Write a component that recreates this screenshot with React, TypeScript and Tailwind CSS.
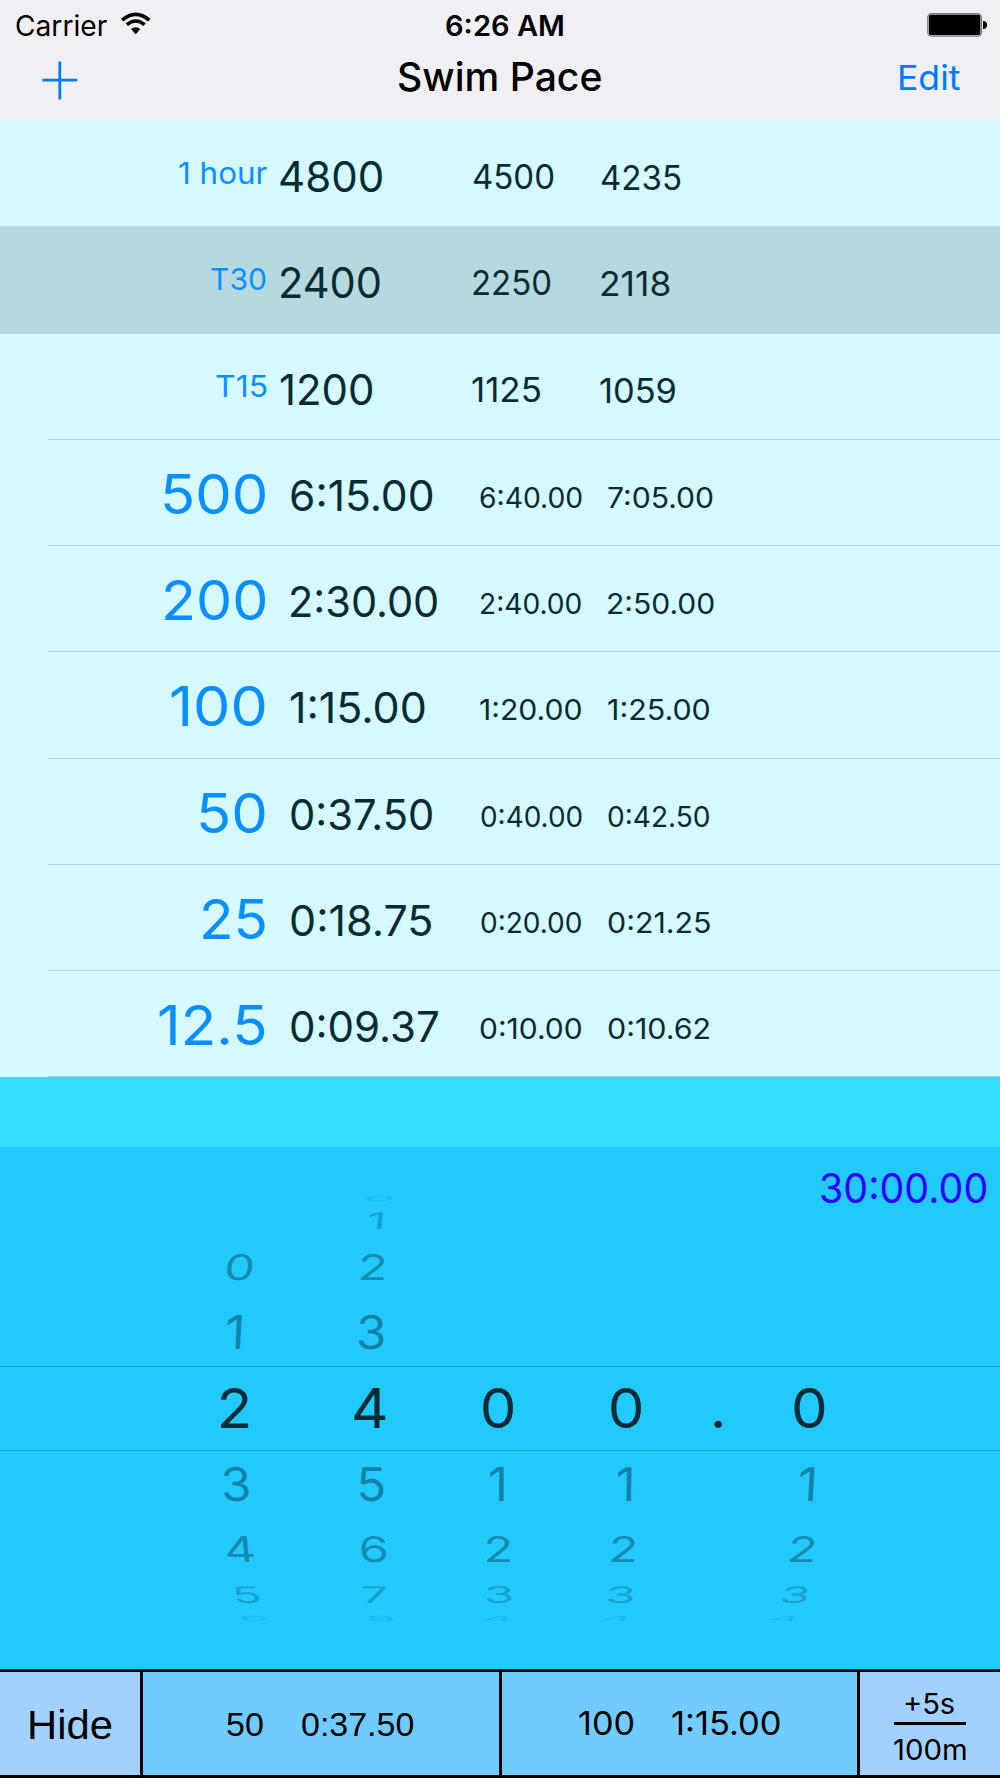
import { useLayoutEffect, useState } from "react";
import type { CSSProperties } from "react";

const INTER = '"Inter", "Noto Sans", sans-serif';
const LIBERATION = '"Liberation Sans", Arial, sans-serif';

type InkProps = {
  text: string;
  size: number;
  /** Left edge of the glyphs, measured from the cell. */
  x: number;
  /** Visible width of the glyphs. */
  w: number;
  /** Baseline, measured from the top of the cell. */
  base: number;
  weight?: number;
  font?: string;
};

/** A line of text stretched so that its glyphs span a given width. */
function Ink({ text, size, x, w, base, weight = 400, font = INTER }: InkProps) {
  const [style, setStyle] = useState<CSSProperties>({});
  useLayoutEffect(() => {
    const ctx = document.createElement("canvas").getContext("2d")!;
    ctx.font = `${weight} ${size}px ${font}`;
    const m = ctx.measureText(text);
    const ink = m.actualBoundingBoxRight + m.actualBoundingBoxLeft;
    const stretch = w / ink;
    setStyle({
      fontFamily: font,
      fontSize: size,
      fontWeight: weight,
      transform: `scaleX(${stretch})`,
      marginLeft: x + m.actualBoundingBoxLeft * stretch,
      lineHeight: `${2 * base - (m.fontBoundingBoxAscent - m.fontBoundingBoxDescent)}px`,
    });
  }, [text, size, x, w, base, weight, font]);
  return (
    <span className="block w-max origin-left whitespace-pre" style={style}>
      {text}
    </span>
  );
}

type Cell = [text: string, left: number, right: number];
type Row = { kind: "distance" | "time"; selected?: boolean; cells: [Cell, Cell, Cell, Cell] };

const rows: Row[] = [
  { kind: "distance", cells: [["1 hour", 179.3, 267.3], ["4800", 280.3, 382.7], ["4500", 472.7, 553.7], ["4235", 600.7, 680.5]] },
  { kind: "distance", selected: true, cells: [["T30", 211, 266], ["2400", 281, 380.3], ["2250", 473, 551], ["2118", 601, 669.5]] },
  { kind: "distance", cells: [["T15", 216, 266.7], ["1200", 280, 372.7], ["1125", 472.5, 541], ["1059", 600.5, 675.7]] },
  { kind: "time", cells: [["500", 164, 265], ["6:15.00", 290.7, 432.5], ["6:40.00", 480.3, 582.5], ["7:05.00", 608.3, 713.3]] },
  { kind: "time", cells: [["200", 164.8, 265], ["2:30.00", 291.3, 438], ["2:40.00", 480.7, 581], ["2:50.00", 608.5, 714.5]] },
  { kind: "time", cells: [["100", 171.5, 265], ["1:15.00", 290.3, 425.4], ["1:20.00", 480.3, 581.7], ["1:25.00", 608.3, 710]] },
  { kind: "time", cells: [["50", 200.4, 265], ["0:37.50", 290.8, 432.5], ["0:40.00", 480.5, 581.7], ["0:42.50", 608.4, 710]] },
  { kind: "time", cells: [["25", 202.8, 265], ["0:18.75", 290.8, 431.5], ["0:20.00", 480.5, 581], ["0:21.25", 608.4, 710.5]] },
  { kind: "time", cells: [["12.5", 159.3, 265], ["0:09.37", 290.8, 437.6], ["0:10.00", 480.5, 582], ["0:10.62", 608.4, 710]] },
];

const typography = {
  distance: [
    { size: 30, base: 63.8 },
    { size: 42.5, base: 71.6 },
    { size: 33.3, base: 68.5 },
    { size: 33.3, base: 69.3 },
  ],
  time: [
    { size: 55.5, base: 74.8 },
    { size: 42.3, base: 71.4 },
    { size: 28.5, base: 68.2 },
    { size: 28.5, base: 68.8 },
  ],
};

const cellStart = [0, 272, 456, 594];
const cellWidth = ["w-[272px]", "w-[184px]", "w-[138px]", "w-[200px]"];
const dividerStyle = ["bg-[#c0e3e9]", "bg-[#b6d9df]", "ml-12 bg-[#b0d4dc]"];

function PaceRow({ row, index }: { row: Row; index: number }) {
  return (
    <li className={`flex h-[106.27px] flex-col ${row.selected ? "bg-[#b6d9df]" : ""}`}>
      <div className="flex h-[105.27px] items-start">
        {row.cells.map(([text, left, right], i) => (
          <div
            key={i}
            className={`h-[105px] shrink-0 ${cellWidth[i]} ${i === 0 ? "text-[#0a8fff]" : "text-[#062c33]"}`}
          >
            <Ink text={text} x={left - cellStart[i]} w={right - left} {...typography[row.kind][i]} />
          </div>
        ))}
      </div>
      <div className={`h-px ${dividerStyle[Math.min(index, 2)]}`} />
    </li>
  );
}

/** Glyph, horizontal centre and slant for each visible step of a wheel, top to bottom. */
type Step = [glyph: string, centre: number, slant: number] | null;

const wheels: { left: number; half: number; width: string; steps: Step[] }[] = [
  {
    left: 171,
    half: 67.5,
    width: "w-[135px]",
    steps: [null, null, ["0", 239.3, -7], ["1", 234.3, -3], ["2", 234.5, 0], ["3", 235.8, 2], ["4", 240.3, 6], ["5", 247.5, 13], ["6", 254.5, 30]],
  },
  {
    left: 306,
    half: 64,
    width: "w-32",
    steps: [["0", 379.5, -20], ["1", 375, -6], ["2", 373, -3], ["3", 370.5, -1], ["4", 370.3, 0], ["5", 371.5, 1], ["6", 373.5, 3], ["7", 375, 6], ["8", 380, 15]],
  },
  {
    left: 434,
    half: 64,
    width: "w-32",
    steps: [null, null, null, null, ["0", 498, 0], ["1", 496.5, 0], ["2", 498.5, 0], ["3", 498.3, 0], ["4", 498.3, -3]],
  },
  {
    left: 562,
    half: 64,
    width: "w-32",
    steps: [null, null, null, null, ["0", 626, 0], ["1", 624, -1], ["2", 623.5, -3], ["3", 620, -6], ["4", 616.3, -20]],
  },
  {
    left: 690,
    half: 28,
    width: "w-14",
    steps: [null, null, null, null, [".", 718.2, 0], null, null, null, null],
  },
  {
    left: 746,
    half: 64,
    width: "w-32",
    steps: [null, null, null, null, ["0", 809.3, 0], ["1", 806.5, -3], ["2", 802.7, -7], ["3", 794.5, -15], ["4", 785, -40]],
  },
];

const stepLook = [
  { h: "h-[15px]", tone: "text-[#073c4c]/15", sx: 1.1, sy: 0.15 },
  { h: "h-[31px]", tone: "text-[#073c4c]/30", sx: 1.05, sy: 0.49 },
  { h: "h-[62px]", tone: "text-[#073c4c]/45", sx: 1.05, sy: 0.76 },
  { h: "h-[68px]", tone: "text-[#073c4c]/50", sx: 1.06, sy: 1 },
  { h: "h-[83.5px]", tone: "text-[#062c33]", sx: 1.06, sy: 1 },
  { h: "h-[68px]", tone: "text-[#073c4c]/50", sx: 1.06, sy: 1 },
  { h: "h-[62px]", tone: "text-[#073c4c]/45", sx: 1.05, sy: 0.76 },
  { h: "h-[31px]", tone: "text-[#073c4c]/30", sx: 1.05, sy: 0.49 },
  { h: "h-[15px]", tone: "text-[#073c4c]/15", sx: 1.1, sy: 0.15 },
];

function WheelGlyph({ glyph, centre, slant, index }: { glyph: string; centre: number; slant: number; index: number }) {
  const [shift, setShift] = useState(0);
  const look = stepLook[index];
  const size = index === 4 ? 55 : 46.5;
  useLayoutEffect(() => {
    const ctx = document.createElement("canvas").getContext("2d")!;
    ctx.font = `400 ${size}px ${INTER}`;
    const m = ctx.measureText(glyph);
    setShift(m.width / 2 - (m.actualBoundingBoxRight - m.actualBoundingBoxLeft) / 2);
  }, [glyph, size]);
  return (
    <span
      className={`block leading-none ${index === 4 ? "pt-px text-[55px]" : "text-[46.5px]"} ${look.tone}`}
      style={{ transform: `translateX(${centre}px) skewX(${slant}deg) scale(${look.sx}, ${look.sy}) translateX(${shift}px)` }}
    >
      {glyph}
    </span>
  );
}

function Picker() {
  return (
    <section className="flex h-[521.5px] flex-col bg-[#22c9ff]">
      <div className="h-[43px] text-[#3300ff]">
        <Ink text="30:00.00" size={41.5} x={821.3} w={165.3} base={56.6} />
      </div>
      <div className="relative flex h-[435.5px] pl-[171px]">
        <div className="absolute inset-x-0 top-[175.5px] h-[85px] border-y border-[#1b9bc4]" />
        {wheels.map((wheel) => (
          <div key={wheel.left} className={`flex shrink-0 flex-col ${wheel.width}`}>
            {wheel.steps.map((step, j) => (
              <div key={j} className={`flex shrink-0 items-center justify-center ${stepLook[j].h}`}>
                {step && (
                  <WheelGlyph glyph={step[0]} centre={step[1] - wheel.left - wheel.half} slant={step[2]} index={j} />
                )}
              </div>
            ))}
          </div>
        ))}
      </div>
    </section>
  );
}

function Header() {
  return (
    <header className="h-[120.3px] bg-[#efeff4] text-black">
      <div className="flex h-[46px] items-start">
        <div className="h-[46px] w-[120px]">
          <Ink text="Carrier" size={28.5} x={16.3} w={91.5} base={36} />
        </div>
        <svg className="mt-[12px] h-[23px] w-[32px]" viewBox="0 0 32 23" fill="none" stroke="#000">
          <path d="M2.2 8.2 Q15.7 -3.4 29.2 8.2" strokeWidth="3.6" />
          <path d="M6.8 12.7 Q15.7 5.2 24.6 12.7" strokeWidth="3.5" />
          <path d="M11 17.1 Q15.7 13.2 20.4 17.1 L15.7 22.2 Z" fill="#000" stroke="none" />
        </svg>
        <div className="h-[46px] w-[768px]">
          <Ink text="6:26 AM" size={28} weight={600} x={294} w={117} base={36} />
        </div>
        <svg className="mt-[12px] h-[26px] w-[68px]" viewBox="0 0 68 26">
          <rect x="7.7" y="1.6" width="53.8" height="22.6" rx="3.4" fill="#c8c8cc" stroke="#666" strokeWidth="0.9" />
          <rect x="8.9" y="2.8" width="51.4" height="20.2" rx="2" fill="#000" />
          <path d="M63 9 a4 4 0 0 1 0 8 Z" fill="#000" />
        </svg>
      </div>
      <div className="flex h-[74.3px] items-start">
        <svg className="ml-10 mt-[14px] h-10 w-10" viewBox="0 0 40 40" stroke="#007aff" strokeWidth="2.7">
          <path d="M2.3 20.2H37.3M19.8 1.6V39.4" />
        </svg>
        <div className="w-[800px]">
          <Ink text="Swim Pace" size={39} weight={500} x={319.3} w={202.5} base={45.8} />
        </div>
        <div className="w-[120px] text-[#007aff]">
          <Ink text="Edit" size={34.5} x={20} w={60} base={44.2} />
        </div>
      </div>
    </header>
  );
}

function Toolbar() {
  return (
    <footer className="flex h-[109px] items-stretch gap-[3px] bg-black pb-[3px] pt-[3px] text-black">
      <div className="w-[140px] bg-[#a3d1ff]">
        <Ink text="Hide" font={LIBERATION} size={41} x={30.3} w={81} base={67.2} />
      </div>
      <div className="flex w-[356px] bg-[#70cbff]">
        <div className="w-[130px]">
          <Ink text="50" font={LIBERATION} size={33.8} x={84} w={36} base={64.4} />
        </div>
        <div className="w-[226px]">
          <Ink text="0:37.50" font={LIBERATION} size={33.8} x={29} w={111.5} base={64.4} />
        </div>
      </div>
      <div className="flex w-[355px] bg-[#70cbff]">
        <div className="w-[150px]">
          <Ink text="100" size={33.2} x={77} w={54} base={63.7} />
        </div>
        <div className="w-[205px]">
          <Ink text="1:15.00" size={33.2} x={20} w={107.5} base={63.7} />
        </div>
      </div>
      <div className="w-[140px] bg-[#a3d1ff]">
        <div className="h-[50px]">
          <Ink text="+5s" size={28} x={45} w={49.3} base={42} />
        </div>
        <div className="ml-[33.5px] h-[3px] w-[72.5px] bg-black" />
        <div>
          <Ink text="100m" size={28} x={33.7} w={72} base={35} />
        </div>
      </div>
    </footer>
  );
}

export default function App() {
  return (
    <main className="flex h-[1778px] w-[1000px] flex-col overflow-hidden bg-[#33ddff] font-['Inter','Noto_Sans',sans-serif]">
      <Header />
      <ul className="h-[956.4px] bg-[#d5f9ff] pt-[0.7px]">
        {rows.map((row, i) => (
          <PaceRow key={row.cells[0][0]} row={row} index={i} />
        ))}
      </ul>
      <div className="h-[70.8px]" />
      <Picker />
      <Toolbar />
    </main>
  );
}
